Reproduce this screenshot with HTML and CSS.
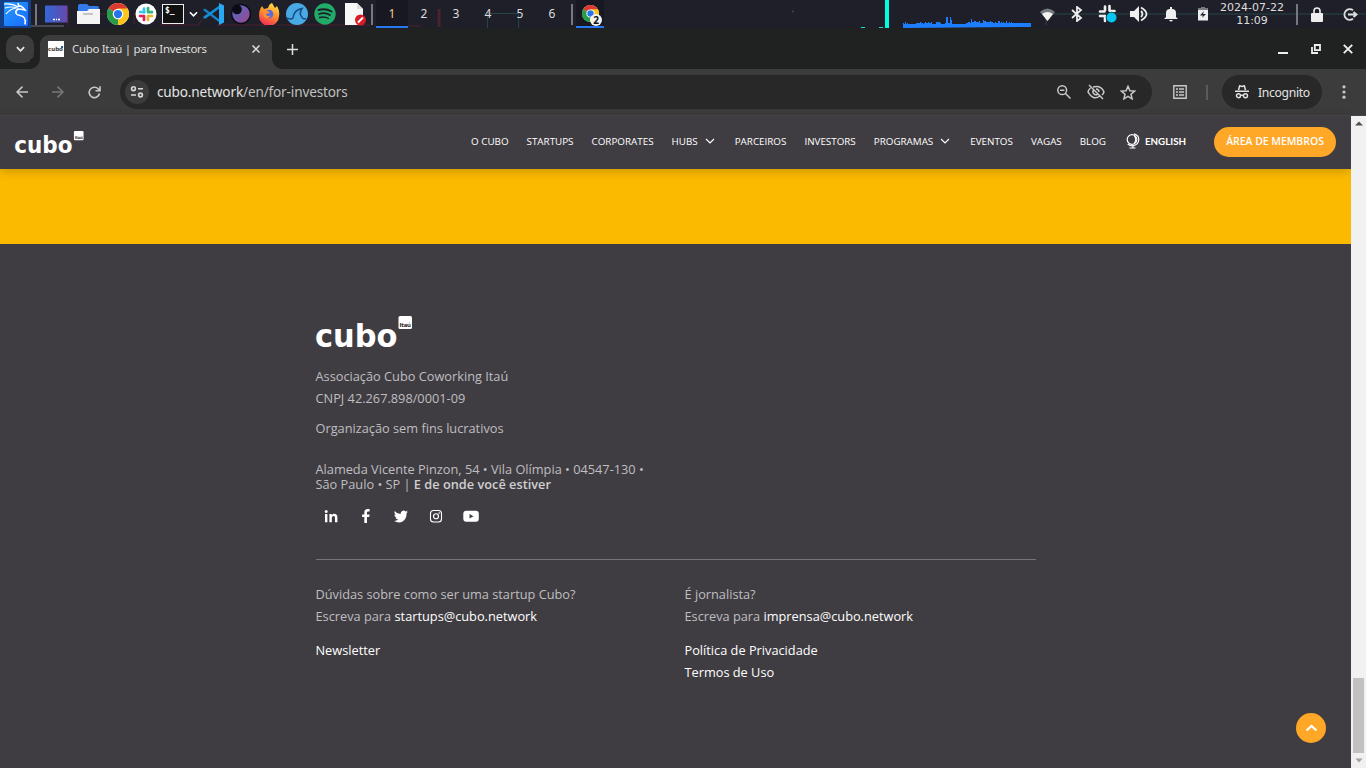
FILE: index.html
```html
<!DOCTYPE html>
<html lang="pt-BR">
<head>
<meta charset="utf-8">
<title>Cubo Itaú | para Investors</title>
<link rel="stylesheet" href="styles.css">
</head>
<body>
<svg class="defs" width="0" height="0"><defs>
<symbol id="chrome" viewBox="0 0 24 24"><circle cx="12" cy="12" r="12" fill="#fff"/><path d="M12 12 L1.6 6 A12 12 0 0 1 22.4 6Z" fill="#db3b2e"/><path d="M12 12 L22.4 6 A12 12 0 0 1 12 24Z" fill="#fcc51d"/><path d="M12 12 L12 24 A12 12 0 0 1 1.6 6Z" fill="#2a9b49"/><path d="M12 6h10.4L17 14.8 12 24l4.8-9z" fill="#fcc51d"/><path d="M1.6 6 7 15l5 2.5L9 23.6A12 12 0 0 1 1.6 6" fill="#2a9b49"/><circle cx="12" cy="12" r="5.8" fill="#fff"/><circle cx="12" cy="12" r="4.5" fill="#2574e8"/></symbol>
<symbol id="down" viewBox="0 0 10 6"><path d="M1 1l4 4 4-4" fill="none" stroke="currentColor"/></symbol>
</defs></svg>

<div class="taskbar">
  <svg class="wires" width="1366" height="28"><g fill="none" stroke="#5d252c" opacity=".75"><path d="M22 26h42" stroke="#55575c" stroke-width="2"/><path d="M68 6v21M96 14h12v-2M134 24V14h20M160 25h38l8-11M217 25h42l8 1M277 25h93"/><path d="M439 27V9" stroke-width="3"/><path d="M408 26h13"/></g><g fill="none" stroke="#24464b"><path d="M487.500 28V13.500h31V28M1046 25V14h320"/></g><circle cx="793" cy="11.500" r="1" fill="#444750"/></svg>
  <svg class="kali" width="31" height="28" viewBox="0 0 31 28"><defs><linearGradient id="kg" x2="1" y2="1"><stop stop-color="#279cff"/><stop offset="1" stop-color="#176aff"/></linearGradient></defs><rect width="31" height="28" fill="#143e86"/><rect x="4" y="2" width="24" height="24" rx="1" fill="url(#kg)"/><path d="M4 4q8-1 14 3M5 8q7-2 12 0M6 14q4-5 10-6" fill="none" stroke="#fff" stroke-width="1.200"/><path d="M17 7q4-3 8 3-4-1-7-1c-4 3-2 6 2 6.500 4 .5 6 3 5 9M18 3l1 4" fill="none" stroke="#fff" stroke-width="1.600"/></svg>
  <i class="bar bar-a"></i>
  <svg class="desk" width="23" height="18" viewBox="0 0 23 18"><defs><linearGradient id="dg" x2="1"><stop stop-color="#3268d9"/><stop offset="1" stop-color="#6848a9"/></linearGradient></defs><rect y=".5" width="22.5" height="17" fill="url(#dg)"/><path d="M8 14.5h2m1 0h1m1 0h2" stroke="#fff" stroke-width="1.5"/></svg>
  <svg class="files" width="23" height="20" viewBox="0 0 23 20"><path d="M1 14V2q0-2 2-2h7l2 2h8q2 0 2 2v6z" fill="#3479e8"/><path d="M0 7h10l2-2h11v15H0z" fill="#f4f4f4"/><path d="M6 10h10" stroke="#b6b6b6" stroke-width="1.5"/></svg>
  <svg class="chr" width="22" height="22"><use href="#chrome"/></svg>
  <svg class="slack" width="22" height="22" viewBox="0 0 22 22"><circle cx="11" cy="11" r="10.5" fill="#fff"/><g stroke-width="2.7" stroke-linecap="round"><path d="M9 5.5v4" stroke="#36c5f0"/><path d="M5.2 9h4" stroke="#36c5f0"/><path d="M13 5.2v4M13 9.2h4" stroke="#2eb67d"/><path d="M13 13v4M13 13h4" stroke="#ecb22e"/><path d="M9 13v4M5 13h4" stroke="#e01e5a"/></g></svg>
  <span class="term">$_</span>
  <svg class="tdown" width="9" height="6"><use href="#down"/></svg>
  <svg class="code" width="22" height="22" viewBox="0 0 22 22"><path d="M0 7l2-1.5L17 17v3z" fill="#1683c7"/><path d="M0 14l2 2L17 5V2z" fill="#148ed8"/><path d="M16 0l5 2.4v17L16 22z" fill="#29a9f2"/></svg>
  <svg class="eye" width="22" height="22" viewBox="0 0 22 22"><defs><linearGradient id="eg" x2="1" y2="1"><stop offset=".3" stop-color="#6261b7"/><stop offset="1" stop-color="#a2468c"/></linearGradient></defs><circle cx="11" cy="11" r="9.5" fill="url(#eg)" stroke="#0b0b18" stroke-width="1.6"/><circle cx="7" cy="6.5" r="4.8" fill="#0b0b18"/></svg>
  <svg class="fox" width="22" height="22" viewBox="0 0 22 22"><defs><linearGradient id="fg" x1=".7" x2=".3" y2="1"><stop stop-color="#ffe044"/><stop offset=".45" stop-color="#ff9330"/><stop offset="1" stop-color="#ef2755"/></linearGradient></defs><path d="M4 3l2 3 4-1q1-4 4-5l3 5 2-2q3 5 2 10a10 10 0 0 1-20 0q0-6 3-10" fill="url(#fg)"/><circle cx="11" cy="11" r="4.3" fill="#5b68e0"/><path d="M5 7l5 1 2 2-4 1q0 2 3 2l2-1q-2 5-7 2z" fill="#ff912f"/></svg>
  <svg class="shark" width="22" height="22" viewBox="0 0 22 22"><circle cx="11" cy="11" r="11" fill="#49a9e5"/><path d="M1 15q4 2 6 0C8 8 12 6 16 5.5c-3 4-2 7 1 10l3 .5" fill="none" stroke="#174f84" stroke-width="1.6"/></svg>
  <svg class="spot" width="22" height="22" viewBox="0 0 22 22"><circle cx="11" cy="11" r="10.7" fill="#22aa68"/><g fill="none" stroke="#191f28" stroke-linecap="round"><path d="M4.5 7q7-2 13 1.5" stroke-width="2"/><path d="M5 11q6-2 11 1" stroke-width="1.7"/><path d="M5.5 14.5q5-1.5 9 1" stroke-width="1.4"/></g></svg>
  <svg class="doc" width="21" height="23" viewBox="0 0 21 23"><path d="M0 0h12l6 6v16H0z" fill="#f7f7f7"/><path d="M12 0v6h6" fill="#ddd"/><circle cx="15.5" cy="17" r="5.5" fill="#d81c25"/><path d="M13 19.5l5-5" stroke="#fff" stroke-width="2"/></svg>
  <i class="bar bar-b"></i>
  <div class="spaces"><b>1</b><span>2</span><span>3</span><span>4</span><span>5</span><span>6</span></div>
  <i class="bar bar-c"></i>
  <div class="task"><svg width="17" height="17"><use href="#chrome"/></svg><em>2</em></div>
  <svg class="graphs" width="176" height="28" viewBox="0 0 176 28"><path d="M6 27.500h4M24 27.500h4" stroke="#1bdcca"/><path d="M30 0h4v28h-4z" fill="#00ffe1"/><path fill="#1c7eff" d="M48 28v-5h1v1h1v-2h1v2h1v-1h1v1h8v-1h4v-1h1v1h2v1h1v-1h1v-1h1v1h2v-1h1v1h2v-1h1v2h4v-2h4v1h1v1h4v-1h1v-6h2v6h2v-6h1v3h1v4h14v-1h2v-1h2v1h1v-4h1v3h2v-1h2v1h3v-1h1v2h3v-3h1v1h2v1h4v-1h1v1h2v1h2v-1h1v1h2v-2h2v2h1v-1h1v1h1v-1h1v1h2v-2h1v2h2v-1h1v1h1v-1h1v1H176v4z"/></svg>
  <svg class="wifi" width="15" height="13" viewBox="0 0 15 13"><path d="M0 4Q7.500-3 15 4L7.500 13z" fill="#777a80"/><path d="M2 6q5.500-4 11 0L7.500 13z" fill="#f2f2f2"/></svg>
  <svg class="bt" width="12" height="16" viewBox="0 0 12 16"><path d="M1 4l9 8-4 3V1l4 3-9 8" fill="none" stroke="#eee" stroke-width="1.800"/></svg>
  <svg class="slk" width="20" height="20" viewBox="0 0 20 20"><g stroke="#eee" stroke-width="2.600" stroke-linecap="round"><path d="M7 2.500v4M2 7.500h4.500M11.500 2v4.500M12 7h4.500M2 12h4.500M7 12v5M11.500 11v5"/></g><circle cx="13.500" cy="13.500" r="5.800" fill="#16232d"/><circle cx="13.500" cy="13.500" r="5" fill="#08c6f2"/></svg>
  <svg class="vol" width="18" height="16" viewBox="0 0 18 16"><path d="M0 5h4l5-5v16l-5-5H0z" fill="#eee"/><path d="M11 5q3 3 0 6M11 1.500q11 6.500 0 13" fill="none" stroke="#eee" stroke-width="1.800"/></svg>
  <svg class="bell" width="14" height="15" viewBox="0 0 14 15"><path d="M0 12l2-2V6q0-4 4-4V0h2v2q4 0 4 4v4l2 2zM5 13h4q-2 3-4 0" fill="#eee"/></svg>
  <svg class="bat" width="10" height="14" viewBox="0 0 10 14"><path d="M3 0h4v1h3v12.500H0V1h3z" fill="#eee"/><path d="M3 0h4v1h3v2H0V1h3z" fill="#777a80"/><path d="M6 4L2 8.500h3L4 11l4-4H5z" fill="#1e1f29"/></svg>
  <div class="clock">2024-07-22<br>11:09</div>
  <i class="bar bar-d"></i>
  <svg class="lock" width="12" height="15" viewBox="0 0 12 15"><rect y="6" width="12" height="9" rx="1" fill="#eee"/><path d="M3 7V4q0-3 3-3t3 3v3" fill="none" stroke="#eee" stroke-width="1.600"/></svg>
  <svg class="out" width="15" height="13" viewBox="0 0 15 13"><path d="M10 2.300a5.300 5.300 0 1 0 0 8.400M5 6.500h8M10.500 4l3 2.500-3 2.500" fill="none" stroke="#ddd" stroke-width="1.900"/></svg>
</div>

<div class="tabs">
  <button class="search"><svg width="9" height="6"><use href="#down"/></svg></button>
  <div class="tab"><span class="fav">cubo<i></i></span><span class="title">Cubo Itaú | para Investors</span><svg width="8" height="8" viewBox="0 0 8 8"><path d="M.5.5l7 7m0-7l-7 7" stroke="#e0e0e0" stroke-width="1.500"/></svg></div>
  <svg class="plus" width="11" height="11" viewBox="0 0 11 11"><path d="M5.500 0v11M0 5.500h11" stroke="#ddd" stroke-width="1.500"/></svg>
  <div class="win"><svg width="10" height="10"><path d="M0 9h10" stroke="#eee" stroke-width="2"/></svg><svg width="10" height="10"><path d="M3.800 1h5.200v5.200H3.800zM1 3v6h6" fill="none" stroke="#eee" stroke-width="1.800"/></svg><svg width="10" height="10"><path d="M.8.8l8.400 8.400m0-8.400L.8 9.200" stroke="#eee" stroke-width="1.900"/></svg></div>
</div>

<div class="tools">
  <svg class="back" width="12" height="12" viewBox="0 0 12 12"><path d="M12 6H1M6.500.6L1 6l5.500 5.400" fill="none" stroke="#c8c8c8" stroke-width="1.500"/></svg>
  <svg class="fwd" width="12" height="12" viewBox="0 0 12 12"><path d="M0 6h11M5.500.6L11 6l-5.500 5.400" fill="none" stroke="#777" stroke-width="1.500"/></svg>
  <svg class="rel" width="13" height="13" viewBox="0 0 13 13"><path d="M11.500 7.500A5.200 5.200 0 1 1 10.300 3L11.500 4.300M12 .3v4.500H7.500" fill="none" stroke="#c8c8c8" stroke-width="1.600"/></svg>
  <div class="omni">
    <span class="site"><svg width="14" height="12" viewBox="0 0 14 12"><g fill="none" stroke="#d8d8d8" stroke-width="1.600"><circle cx="3.500" cy="2.700" r="1.900"/><path d="M8 2.700h5M1 9h5"/><circle cx="10.500" cy="9" r="1.900"/></g></svg></span>
    <span class="url">cubo.network<span>/en/for-investors</span></span>
    <svg class="mag" width="14" height="14" viewBox="0 0 14 14"><g fill="none" stroke="#c8c8c8" stroke-width="1.500"><circle cx="5.200" cy="5.200" r="4.400"/><path d="M8.500 8.500l5 5M3 5.200h4.400"/></g></svg>
    <svg class="hid" width="18" height="16" viewBox="0 0 18 16"><g fill="none" stroke="#c8c8c8" stroke-width="1.500"><path d="M3.500 4Q1.500 5.500 1 8q5 9 12 4M6 3q8-2 11 5-.8 2-2 3M6.500 6a3 3 0 0 0 4 4.300M9 5q3 .3 3 3M2 1l14 14"/></g></svg>
    <svg class="star" width="16" height="15" viewBox="0 0 16 15"><path d="M8 1.300l1.900 4.400 4.700.4-3.600 3.100 1.100 4.600L8 11.300l-4.100 2.500L5 9.200 1.400 6.100l4.700-.4z" fill="none" stroke="#c8c8c8" stroke-width="1.500"/></svg>
  </div>
  <svg class="list" width="14" height="14" viewBox="0 0 14 14"><path d="M.8.8h12.400v12.400H.8zM3 4h2m1 0h5M3 7h2m1 0h5M3 10h2m1 0h5" fill="none" stroke="#c8c8c8" stroke-width="1.400"/></svg>
  <i class="split"></i>
  <div class="incog"><svg width="14" height="14" viewBox="0 0 14 14"><path d="M3.500 5l1.200-4.200L7 1.500l2.300-.7L10.500 5M0 6.200h14" fill="none" stroke="#e3e3e3" stroke-width="1.500"/><g fill="none" stroke="#e3e3e3" stroke-width="1.400"><circle cx="3.500" cy="10.700" r="2"/><circle cx="10.500" cy="10.700" r="2"/><path d="M5.500 10.300h3"/></g></svg>Incognito</div>
  <svg class="dots" width="4" height="14"><g fill="#c8c8c8"><circle cx="2" cy="1.800" r="1.600"/><circle cx="2" cy="7" r="1.600"/><circle cx="2" cy="12.200" r="1.600"/></g></svg>
</div>

<div class="view">
  <div class="page">
    <header>
      <svg class="logo-s" width="70" height="26" viewBox="0 0 98 36"><text class="word" x="-1" y="34" textLength="81.500" lengthAdjust="spacingAndGlyphs">cubo</text><rect x="82.500" y="2.500" width="13.500" height="13" rx="1.500" fill="#fff"/><text class="itau" x="83.500" y="13.500" textLength="11.500">Itaú</text></svg>
      <nav><a>O CUBO</a><a>STARTUPS</a><a>CORPORATES</a><a>HUBS<svg width="10" height="6"><use href="#down"/></svg></a><a>PARCEIROS</a><a>INVESTORS</a><a>PROGRAMAS<svg width="10" height="6"><use href="#down"/></svg></a><a>EVENTOS</a><a>VAGAS</a><a>BLOG</a></nav>
      <div class="lang"><svg width="15" height="16" viewBox="0 0 15 16"><g fill="none" stroke="#fff" stroke-width="1.200"><circle cx="6" cy="6.500" r="4.800"/><path d="M8 .8q4.800 1.200 4.800 5.700-.3 5.500-6 6.300-3.300 0-5-1.800M7 13v2M3.500 15h6M8.500 3q2.500 3 0 7"/></g></svg>ENGLISH</div>
      <a class="members">ÁREA DE MEMBROS</a>
    </header>
    <div class="band"></div>
    <footer>
      <svg class="logo" width="98" height="36" viewBox="0 0 98 36"><text class="word" x="-1" y="34" textLength="82.500" lengthAdjust="spacingAndGlyphs">cubo</text><rect x="82.500" y="3" width="13.500" height="13" rx="1.500" fill="#fff"/><text class="itau" x="83.500" y="14" textLength="11.500">Itaú</text></svg>
      <p class="assoc">Associação Cubo Coworking Itaú<br>CNPJ 42.267.898/0001-09</p>
      <p class="org">Organização sem fins lucrativos</p>
      <p class="addr">Alameda Vicente Pinzon, 54 • Vila Olímpia • 04547-130 •<br>São Paulo • SP | <b>E de onde você estiver</b></p>
      <div class="social">
        <svg viewBox="0 0 16 16"><path d="M2 6h2.400v8.300H2zM6.400 6h2.300v1.200q1-1.400 2.600-1.400 3.100 0 3.100 3.600v4.900H12V9.800q0-1.900-1.500-1.900-1.700 0-1.700 2v4.400H6.400z" fill="#fff"/><circle cx="3.200" cy="3.400" r="1.500" fill="#fff"/></svg>
        <svg viewBox="0 0 16 16"><path d="M6.300 15V9H4.100V6.400h2.200V4.500Q6.300 1 9.600 1h2v2.400h-1.400Q9 3.400 9 4.600v1.800h2.600L11.200 9H9v6z" fill="#fff"/></svg>
        <svg viewBox="0 0 16 16"><path d="M15 3.600l-1.500.6 1.100-1.600-2 .8A3 3 0 0 0 7.600 6Q4 6 1.700 2.900.7 5.300 2.600 7l-1.300-.3q.1 2.200 2.400 2.900H2.400q.8 1.900 2.800 2-1.900 1.500-4.200 1.300 4.800 2.800 9 .3 3.600-2.500 3.600-8z" fill="#fff"/></svg>
        <svg viewBox="0 0 16 16"><rect x="2.500" y="2.500" width="11" height="11.500" rx="3" fill="none" stroke="#fff" stroke-width="1.100"/><circle cx="8" cy="8.250" r="2.500" fill="none" stroke="#fff" stroke-width="1.200"/><circle cx="11.200" cy="5" r=".8" fill="#fff"/></svg>
        <svg viewBox="0 0 16 16"><rect x=".3" y="2.700" width="15.500" height="11" rx="3" fill="#fff"/><path d="M6.500 5.900v4.600l4-2.300z" fill="#403d42"/></svg>
      </div>
      <hr>
      <div class="cols">
        <div><p>Dúvidas sobre como ser uma startup Cubo?<br>Escreva para <a>startups@cubo.network</a></p><p><a>Newsletter</a></p></div>
        <div><p>É jornalista?<br>Escreva para <a>imprensa@cubo.network</a></p><p><a>Política de Privacidade</a><br><a>Termos de Uso</a></p></div>
      </div>
    </footer>
  </div>
  <div class="scroll"><svg width="8" height="5"><path d="M0 4.500h8L4 .5z" fill="#505050"/></svg><div class="thumb"></div><svg class="sd" width="8" height="5"><path d="M.5.500h7L4 4.500z" fill="#a0a0a0"/></svg></div>
  <a class="top"><svg width="13" height="8" viewBox="0 0 13 8"><path d="M1.500 6.500l5-4.500 5 4.500" fill="none" stroke="#fff" stroke-width="2.300"/></svg></a>
</div>
</body>
</html>
```
FILE: styles.css
```css
* { box-sizing: border-box; }
body { margin: 0; width: 1366px; height: 768px; overflow: hidden; background: #403d42; font-family: "Noto Sans", sans-serif; color: #fff; }
svg { flex: none; display: block; }
.defs { position: absolute; }
button { border: 0; padding: 0; }
#down path { stroke-width: inherit; }

/* desktop panel */
.taskbar { position: relative; display: flex; align-items: center; height: 28px; background: #1e1f29; }
.taskbar > * { flex: none; position: relative; }
.taskbar > .wires { position: absolute; left: 0; top: 0; }
.bar { width: 2px; height: 21px; background: #77787d; }
.bar-a { margin-left: 4px; }
.desk { margin-left: 8px; }
.files { margin-left: 9px; }
.chr { margin-left: 7px; }
.slack { margin-left: 6px; }
.term { width: 22px; height: 20px; margin-left: 5px; border: 1px solid #eee; background: #111; font: bold 8px/11px "DejaVu Sans Mono", monospace; padding-left: 2px; }
.tdown { margin-left: 4.5px; stroke-width: 1.8; }
.code { margin-left: 5.5px; }
.eye { margin-left: 5px; }
.fox { margin-left: 6px; }
.shark { margin-left: 6px; }
.spot { margin-left: 6px; }
.doc { margin-left: 9px; }
.bar-b { margin-left: 5px; }
.spaces { display: flex; margin-left: 3px; height: 28px; font: 12px/27px "Noto Sans", sans-serif; color: #dedede; }
.spaces > * { width: 32px; text-align: center; }
.spaces b { font-weight: 400; color: #f3c98b; background: #171821; border-bottom: 2px solid #2878f5; }
.bar-c { margin-left: 3px; }
.task { margin-left: 3px; width: 28px; height: 28px; background: #171821; border-bottom: 2px solid #2878f5; padding: 5px 0 0 6px; }
.task em { position: absolute; left: 14px; top: 14px; width: 12px; height: 12px; border-radius: 6px; background: #f2f2f2; color: #111; font: bold 10px/12px "Noto Sans", sans-serif; text-align: center; }
.graphs { margin-left: 251px; }
.wifi { margin-left: 9px; }
.bt { margin-left: 16px; }
.slk { margin-left: 15px; }
.vol { margin-left: 12px; }
.bell { margin-left: 16px; }
.bat { margin-left: 20px; }
.clock { width: 76px; margin-left: 6px; font: 11px/13px "DejaVu Sans", sans-serif; color: #dedede; text-align: center; }
.bar-d { margin-left: 6px; }
.lock { margin-left: 13px; }
.out { margin-left: 20px; }

/* browser chrome */
.tabs { display: flex; height: 41px; background: #202221; padding: 7px 13px 0 6px; }
.search { width: 28px; height: 28px; border-radius: 10px; background: #3c3c3c; display: grid; place-items: center; color: #e3e3e3; margin-right: 6px; }
.search svg { stroke-width: 2; }
.tab { position: relative; display: flex; align-items: center; width: 232px; height: 34px; padding: 0 12px 6px 8px; border-radius: 9px 9px 0 0; background: #3c3c3c; }
.tab::before, .tab::after { content: ""; position: absolute; bottom: 0; width: 10px; height: 10px; }
.tab::before { left: -10px; background: radial-gradient(circle at 0 0, #202221 9.5px, #3c3c3c 10px); }
.tab::after { right: -10px; background: radial-gradient(circle at 100% 0, #202221 9.5px, #3c3c3c 10px); }
.fav { position: relative; width: 16px; height: 16px; background: #fff; color: #333; font: bold 5.5px/17px "DejaVu Sans", sans-serif; }
.fav i { position: absolute; right: 1px; top: 5px; width: 2px; height: 2px; background: #258; }
.title { flex: 1; margin-left: 8px; font-size: 11.5px; letter-spacing: -.32px; line-height: 16px; color: #dedede; white-space: nowrap; }
.plus { margin: 9px 0 0 14.5px; }
.win { display: flex; gap: 22.5px; margin: 9px 0 0 auto; }
.tools { display: flex; align-items: center; height: 47px; background: #3c3c3c; border-bottom: 1px solid #48474a; padding: 0 20px 0 16px; }
.fwd { margin-left: 24px; }
.rel { margin-left: 23.5px; }
.omni { display: flex; align-items: center; width: 1032px; height: 34px; margin-left: 19.5px; padding: 0 16px 0 5px; border-radius: 17px; background: #282828; }
.site { display: grid; place-items: center; width: 24px; height: 24px; border-radius: 50%; background: #3c3c3c; }
.url { flex: 1; margin-left: 8px; font-size: 13.6px; letter-spacing: -.16px; line-height: 20px; color: #e3e3e3; }
.url span { color: #c0c0c0; }
.hid { margin-left: 16px; }
.star { margin-left: 15px; }
.list { margin-left: 21px; }
.split { width: 2px; height: 15px; margin: 0 14px 0 19px; background: #5b5b5b; }
.incog { display: flex; align-items: center; width: 100px; height: 34px; border-radius: 17px; background: #282828; padding-left: 13px; gap: 9px; font-size: 12.2px; letter-spacing: -.33px; color: #e3e3e3; }
.dots { margin-left: 20px; }

/* web page */
.view { position: relative; display: flex; height: 652px; font-family: "Open Sans", sans-serif; }
.page { width: 1351px; }
header { position: relative; display: flex; align-items: center; height: 53px; padding: 0 15px 2px; background: #403d42; box-shadow: 0 2px 10px rgba(0, 0, 0, .2); }
.logo, .logo-s { overflow: visible; }
.word { font: bold 32px "DejaVu Sans", sans-serif; fill: #fff; }
.itau { font: bold 5.5px "DejaVu Sans", sans-serif; fill: #333; }
nav { display: flex; gap: 18px; width: 655px; margin: 0 0 1.5px 386px; font-size: 9.83px; line-height: 14px; white-space: nowrap; }
nav a { display: flex; align-items: center; }
nav svg { margin: 1px 2px 0 7px; stroke-width: 1.15; }
.lang { display: flex; align-items: center; gap: 4px; margin-bottom: 1px; font: bold 9.75px/14px "Lato", sans-serif; }
.members { width: 122px; height: 30px; margin-left: auto; border-radius: 15px; background: #ffa726; font-size: 10.45px; font-weight: 600; line-height: 29px; text-align: center; white-space: nowrap; }
.band { height: 75px; background: #fbba00; }
footer { width: 720px; margin-left: 315.5px; padding-top: 69px; font-size: 12.77px; line-height: 22px; color: #bfbec0; }
footer p { margin: 0; }
.assoc { padding-top: 16px; }
.org { padding-top: 8px; }
.addr { padding-top: 23px; line-height: 15px; white-space: nowrap; }
.addr b { font-weight: 600; color: #cfcfd0; }
.social { display: flex; gap: 19px; padding: 16px 0 0 7px; }
.social svg { width: 16px; height: 16px; }
hr { height: 1px; border: 0; margin: 35px 0 23px; background: #77757a; }
.cols { display: grid; grid-template-columns: 369px 1fr; }
.cols p + p { margin-top: 12px; }
.cols a { color: #fff; }
.scroll { position: relative; width: 15px; background: #f1f1f1; display: flex; flex-direction: column; align-items: center; padding: 5px 0; }
.thumb { width: 11px; height: 75px; margin-top: auto; background: #c1c1c1; }
.sd { margin-top: 5px; }
.top { position: absolute; left: 1296px; top: 597px; width: 30px; height: 30px; border-radius: 50%; background: #ffa726; display: grid; place-items: center; }
```
